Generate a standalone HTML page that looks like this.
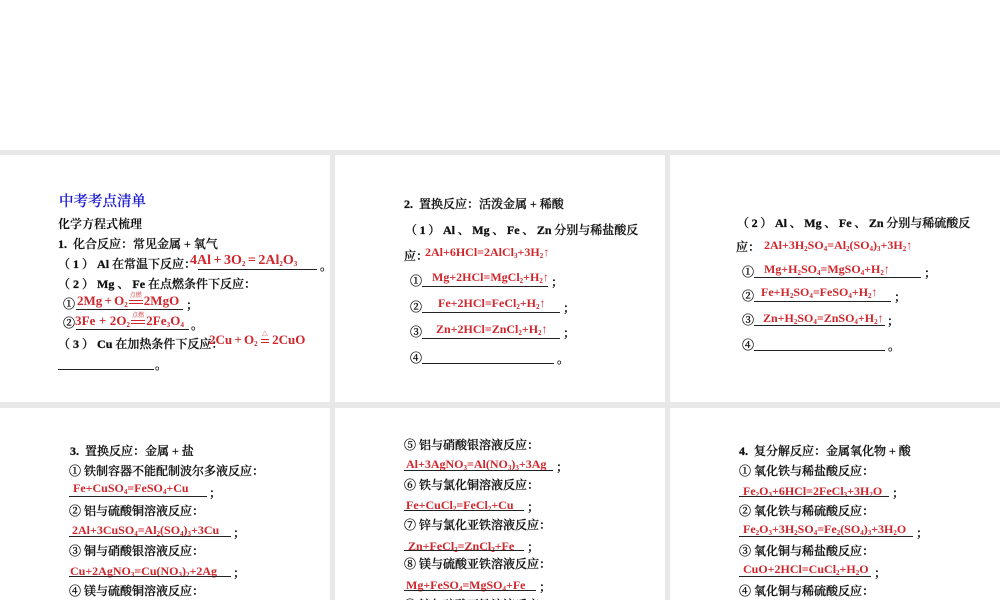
<!DOCTYPE html>
<html lang="zh">
<head>
<meta charset="utf-8">
<style>
html,body{margin:0;padding:0;width:1000px;height:600px;overflow:hidden;background:#fff}
#w{position:relative;width:1000px;height:600px;overflow:hidden;filter:blur(.3px)}
.g{position:absolute;background:#e8e8e8}
p{position:absolute;margin:0;white-space:nowrap;font:bold 12px/16px "Liberation Serif","Noto Serif CJK SC",serif;color:#111}
p.c{font-weight:500;-webkit-text-stroke:.3px #111}
p.s{word-spacing:-.35px}
p b{font-family:"Liberation Serif",serif;font-weight:bold}
p.r{color:#d0262c;font-family:"Liberation Serif","Noto Serif CJK SC",serif;font-weight:bold}
p.b{font-size:14px;word-spacing:-1px}
p.m{font-size:13px;word-spacing:-1px}
sub{font-size:7px;line-height:0;vertical-align:-2px}
i{position:absolute;height:1px;background:#222}
.f{display:inline-block;position:relative;width:16px;height:10px;font-size:6px;line-height:6px;text-align:center;vertical-align:baseline;font-style:normal;font-weight:normal}
.f u{position:absolute;left:0;right:0;top:-2px;text-decoration:none;white-space:nowrap}
.f s{position:absolute;left:1px;right:1px;top:5px;height:2px;border-top:1px solid #d0262c;border-bottom:1px solid #d0262c;text-decoration:none}
</style>
</head>
<body>
<div id="w">
<div class="g" style="left:0;top:150px;width:1000px;height:5px"></div>
<div class="g" style="left:0;top:402px;width:1000px;height:6px"></div>
<div class="g" style="left:330px;top:150px;width:5px;height:450px"></div>
<div class="g" style="left:665px;top:150px;width:5px;height:450px"></div>

<!-- Panel 1 -->
<p style="left:59px;top:194px;font-size:14.5px;color:#1a1ad0;font-weight:500;-webkit-text-stroke:.25px #1a1ad0">中考考点清单</p>
<p style="left:58px;top:216px">化学方程式梳理</p>
<p class="c" style="left:58px;top:236px"><b>1.&nbsp;</b> 化合反应：常见金属 + 氧气</p>
<p class="c" style="left:58px;top:256px">（ <b>1</b> ） <b>Al</b> 在常温下反应：</p>
<p class="r b" style="left:190px;top:253px">4Al + 3O<sub>2</sub> = 2Al<sub>2</sub>O<sub>3</sub></p>
<i style="left:198px;top:269px;width:119px"></i>
<p class="c" style="left:320px;top:258px">。</p>
<p class="c" style="left:58px;top:276px">（ <b>2</b> ） <b>Mg</b> 、 <b>Fe</b> 在点燃条件下反应：</p>
<p class="c" style="left:63px;top:296px">①</p>
<p class="r m" style="left:77px;top:293px">2Mg + O<sub>2</sub><span class="f"><u>点燃</u><s></s></span>2MgO</p>
<i style="left:76px;top:309px;width:107px"></i>
<p class="c" style="left:186px;top:297px">；</p>
<p class="c" style="left:63px;top:315px">②</p>
<p class="r m" style="left:75px;top:313px;word-spacing:0;letter-spacing:.1px">3Fe + 2O<sub>2</sub><span class="f"><u>点燃</u><s></s></span>2Fe<sub>3</sub>O<sub>4</sub></p>
<i style="left:76px;top:329px;width:113px"></i>
<p class="c" style="left:191px;top:317px">。</p>
<p class="c" style="left:58px;top:336px">（ <b>3</b> ） <b>Cu</b> 在加热条件下反应：</p>
<p class="r m" style="left:209px;top:332px">2Cu + O<sub>2</sub> <span class="f" style="width:10px"><u>△</u><s></s></span> 2CuO</p>
<i style="left:58px;top:369px;width:96px"></i>
<p class="c" style="left:155px;top:357px">。</p>

<!-- Panel 2 -->
<p class="c" style="left:404px;top:196px"><b>2.&nbsp;</b> 置换反应：活泼金属 + 稀酸</p>
<p class="c s" style="left:405px;top:222px">（ <b>1</b> ） <b>Al</b> 、 <b>Mg</b> 、 <b>Fe</b> 、 <b>Zn</b> 分别与稀盐酸反</p>
<p class="c" style="left:404px;top:248px">应：</p>
<p class="r" style="left:425px;top:244px">2Al+6HCl=2AlCl<sub>3</sub>+3H<sub>2</sub>↑</p>
<p class="c" style="left:410px;top:273px">①</p>
<p class="r" style="left:432px;top:269px">Mg+2HCl=MgCl<sub>2</sub>+H<sub>2</sub>↑</p>
<i style="left:422px;top:286px;width:126px"></i>
<p class="c" style="left:551px;top:274px">；</p>
<p class="c" style="left:410px;top:299px">②</p>
<p class="r" style="left:438px;top:295px">Fe+2HCl=FeCl<sub>2</sub>+H<sub>2</sub>↑</p>
<i style="left:422px;top:312px;width:138px"></i>
<p class="c" style="left:563px;top:300px">；</p>
<p class="c" style="left:410px;top:324px">③</p>
<p class="r" style="left:436px;top:321px">Zn+2HCl=ZnCl<sub>2</sub>+H<sub>2</sub>↑</p>
<i style="left:422px;top:338px;width:138px"></i>
<p class="c" style="left:563px;top:325px">；</p>
<p class="c" style="left:410px;top:350px">④</p>
<i style="left:422px;top:363px;width:132px"></i>
<p class="c" style="left:557px;top:351px">。</p>

<!-- Panel 3 -->
<p class="c s" style="left:737px;top:215px">（ <b>2</b> ） <b>Al</b> 、 <b>Mg</b> 、 <b>Fe</b> 、 <b>Zn</b> 分别与稀硫酸反</p>
<p class="c" style="left:736px;top:239px">应：</p>
<p class="r" style="left:764px;top:237px">2Al+3H<sub>2</sub>SO<sub>4</sub>=Al<sub>2</sub>(SO<sub>4</sub>)<sub>3</sub>+3H<sub>2</sub>↑</p>
<p class="c" style="left:742px;top:264px">①</p>
<p class="r" style="left:764px;top:261px">Mg+H<sub>2</sub>SO<sub>4</sub>=MgSO<sub>4</sub>+H<sub>2</sub>↑</p>
<i style="left:754px;top:277px;width:167px"></i>
<p class="c" style="left:924px;top:265px">；</p>
<p class="c" style="left:742px;top:288px">②</p>
<p class="r" style="left:761px;top:284px">Fe+H<sub>2</sub>SO<sub>4</sub>=FeSO<sub>4</sub>+H<sub>2</sub>↑</p>
<i style="left:754px;top:301px;width:137px"></i>
<p class="c" style="left:894px;top:289px">；</p>
<p class="c" style="left:742px;top:312px">③</p>
<p class="r" style="left:763px;top:310px">Zn+H<sub>2</sub>SO<sub>4</sub>=ZnSO<sub>4</sub>+H<sub>2</sub>↑</p>
<i style="left:754px;top:325px;width:131px"></i>
<p class="c" style="left:887px;top:313px">；</p>
<p class="c" style="left:742px;top:337px">④</p>
<i style="left:754px;top:350px;width:131px"></i>
<p class="c" style="left:888px;top:338px">。</p>

<!-- Panel 4 -->
<p class="c" style="left:70px;top:443px"><b>3.&nbsp;</b> 置换反应：金属 + 盐</p>
<p class="c" style="left:69px;top:463px">① 铁制容器不能配制波尔多液反应：</p>
<p class="r" style="left:73px;top:480px">Fe+CuSO<sub>4</sub>=FeSO<sub>4</sub>+Cu</p>
<i style="left:69px;top:496px;width:138px"></i>
<p class="c" style="left:209px;top:485px">；</p>
<p class="c" style="left:69px;top:503px">② 铝与硫酸铜溶液反应：</p>
<p class="r" style="left:72px;top:522px">2Al+3CuSO<sub>4</sub>=Al<sub>2</sub>(SO<sub>4</sub>)<sub>3</sub>+3Cu</p>
<i style="left:69px;top:536px;width:162px"></i>
<p class="c" style="left:233px;top:525px">；</p>
<p class="c" style="left:69px;top:543px">③ 铜与硝酸银溶液反应：</p>
<p class="r" style="left:70px;top:563px">Cu+2AgNO<sub>3</sub>=Cu(NO<sub>3</sub>)<sub>2</sub>+2Ag</p>
<i style="left:69px;top:576px;width:162px"></i>
<p class="c" style="left:233px;top:565px">；</p>
<p class="c" style="left:69px;top:583px">④ 镁与硫酸铜溶液反应：</p>

<!-- Panel 5 -->
<p class="c" style="left:404px;top:437px">⑤ 铝与硝酸银溶液反应：</p>
<p class="r" style="left:406px;top:456px">Al+3AgNO<sub>3</sub>=Al(NO<sub>3</sub>)<sub>3</sub>+3Ag</p>
<i style="left:404px;top:470px;width:149px"></i>
<p class="c" style="left:556px;top:459px">；</p>
<p class="c" style="left:404px;top:477px">⑥ 铁与氯化铜溶液反应：</p>
<p class="r" style="left:406px;top:497px">Fe+CuCl<sub>2</sub>=FeCl<sub>2</sub>+Cu</p>
<i style="left:404px;top:510px;width:120px"></i>
<p class="c" style="left:527px;top:499px">；</p>
<p class="c" style="left:404px;top:517px">⑦ 锌与氯化亚铁溶液反应：</p>
<p class="r" style="left:408px;top:538px">Zn+FeCl<sub>2</sub>=ZnCl<sub>2</sub>+Fe</p>
<i style="left:404px;top:550px;width:120px"></i>
<p class="c" style="left:527px;top:539px">；</p>
<p class="c" style="left:404px;top:556px">⑧ 镁与硫酸亚铁溶液反应：</p>
<p class="r" style="left:406px;top:577px">Mg+FeSO<sub>4</sub>=MgSO<sub>4</sub>+Fe</p>
<i style="left:404px;top:590px;width:132px"></i>
<p class="c" style="left:539px;top:579px">；</p>
<p class="c" style="left:404px;top:597px">⑨ 锌与硫酸亚铁溶液反应：</p>

<!-- Panel 6 -->
<p class="c" style="left:739px;top:443px"><b>4.&nbsp;</b> 复分解反应：金属氧化物 + 酸</p>
<p class="c" style="left:739px;top:463px">① 氧化铁与稀盐酸反应：</p>
<p class="r" style="left:743px;top:483px">Fe<sub>2</sub>O<sub>3</sub>+6HCl=2FeCl<sub>3</sub>+3H<sub>2</sub>O</p>
<i style="left:739px;top:496px;width:150px"></i>
<p class="c" style="left:892px;top:485px">；</p>
<p class="c" style="left:739px;top:503px">② 氧化铁与稀硫酸反应：</p>
<p class="r" style="left:743px;top:521px">Fe<sub>2</sub>O<sub>3</sub>+3H<sub>2</sub>SO<sub>4</sub>=Fe<sub>2</sub>(SO<sub>4</sub>)<sub>3</sub>+3H<sub>2</sub>O</p>
<i style="left:739px;top:536px;width:174px"></i>
<p class="c" style="left:916px;top:525px">；</p>
<p class="c" style="left:739px;top:543px">③ 氧化铜与稀盐酸反应：</p>
<p class="r" style="left:743px;top:561px">CuO+2HCl=CuCl<sub>2</sub>+H<sub>2</sub>O</p>
<i style="left:739px;top:576px;width:132px"></i>
<p class="c" style="left:874px;top:565px">；</p>
<p class="c" style="left:739px;top:583px">④ 氧化铜与稀硫酸反应：</p>
</div>
</body>
</html>
